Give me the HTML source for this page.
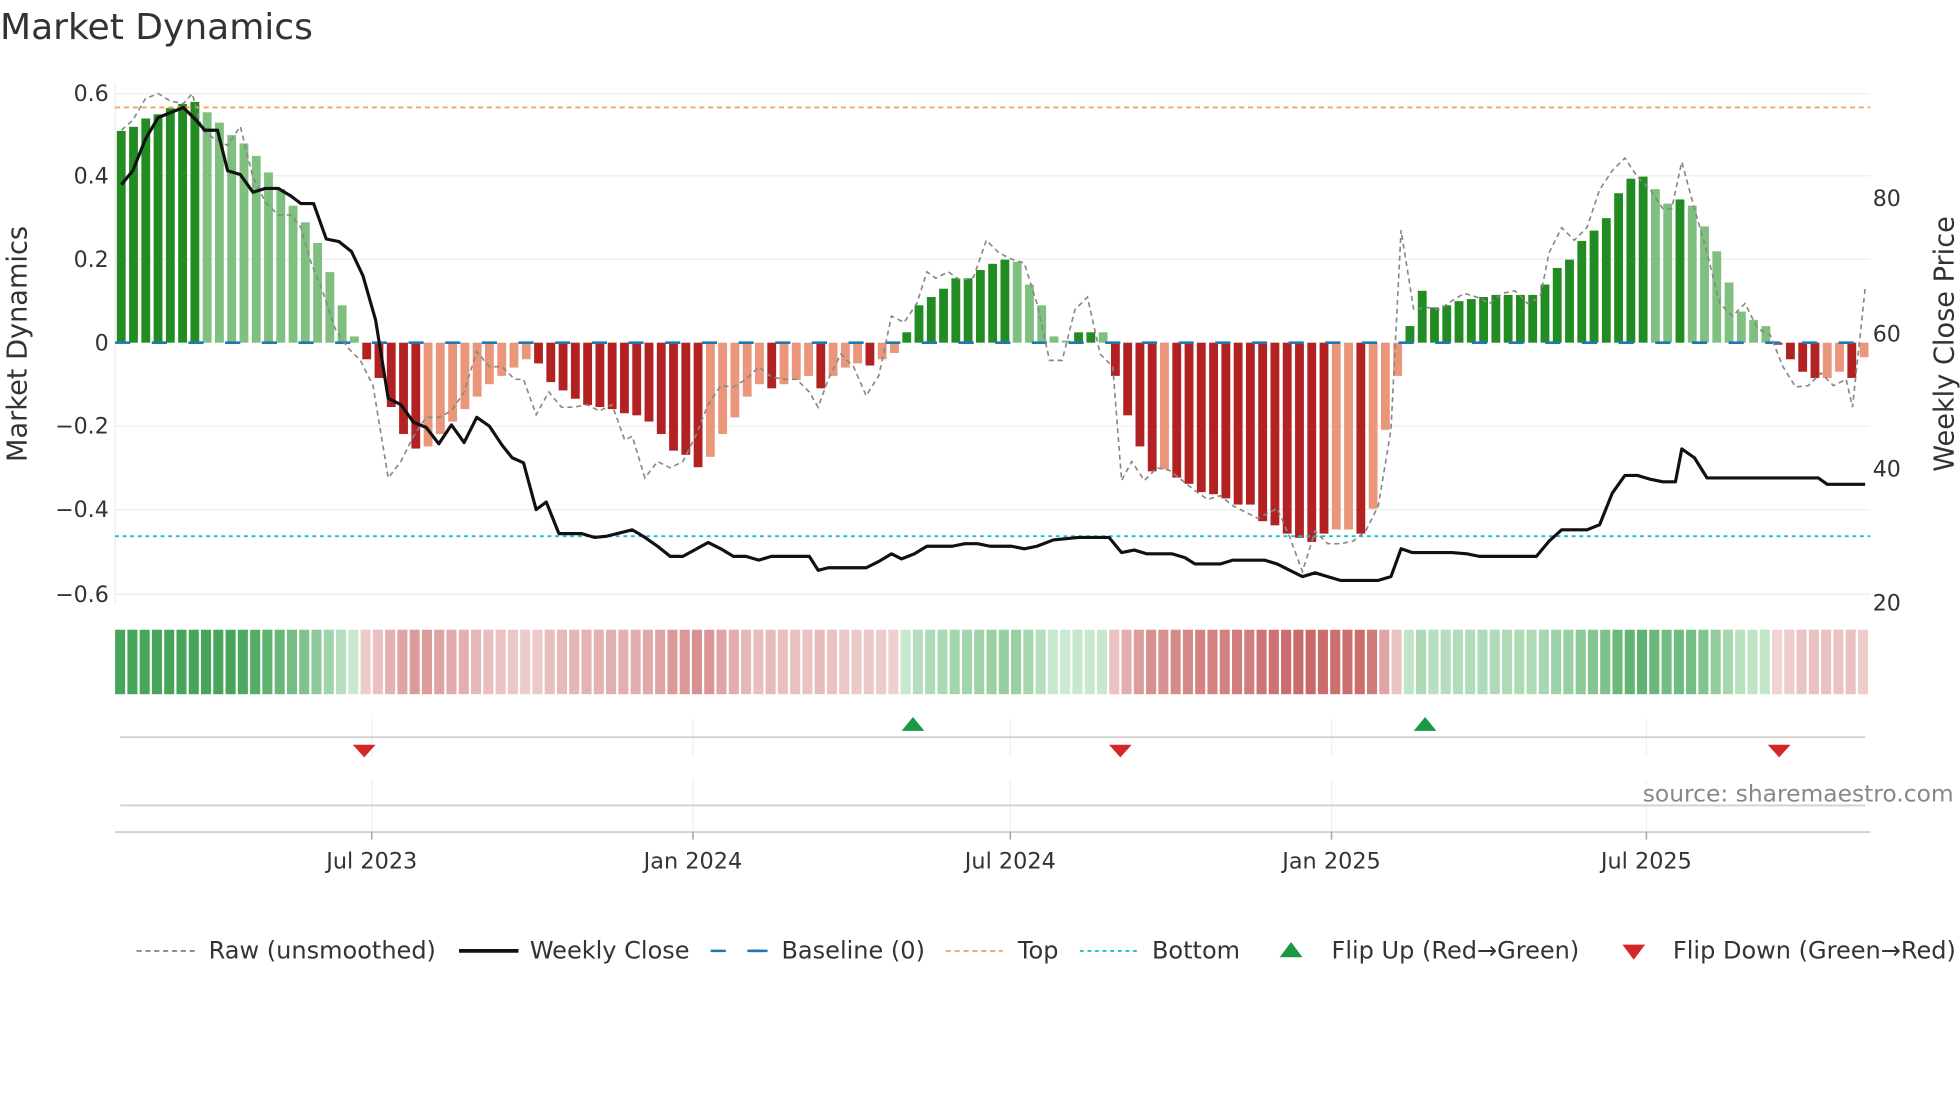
<!DOCTYPE html>
<html><head><meta charset="utf-8"><style>
html,body{margin:0;padding:0;background:#fff;width:1960px;height:1102px;overflow:hidden}
svg{display:block;font-family:"DejaVu Sans","Liberation Sans",sans-serif}
</style></head><body>
<svg id="s" width="1960" height="1102" viewBox="0 0 1550 871.5" xmlns="http://www.w3.org/2000/svg">
<text x="0" y="31" font-size="28.5" fill="#333">Market Dynamics</text>
<g stroke="#ebedf0" stroke-width="1">
<line x1="91" y1="74" x2="1479" y2="74"/><line x1="91" y1="139" x2="1479" y2="139"/><line x1="91" y1="205" x2="1479" y2="205"/><line x1="91" y1="337" x2="1479" y2="337"/><line x1="91" y1="403" x2="1479" y2="403"/><line x1="91" y1="470" x2="1479" y2="470"/>
<line x1="91" y1="66" x2="91" y2="478"/>
</g>
<g font-size="17.5" fill="#333" text-anchor="end">
<text x="86" y="80">0.6</text><text x="86" y="145">0.4</text><text x="86" y="211">0.2</text><text x="86" y="277">0</text><text x="86" y="343">−0.2</text><text x="86" y="409">−0.4</text><text x="86" y="476">−0.6</text>
</g>
<g font-size="17.5" fill="#333">
<text x="1481" y="163">80</text><text x="1481" y="270">60</text><text x="1481" y="377">40</text><text x="1481" y="483">20</text>
</g>
<text transform="translate(21,272) rotate(-90)" font-size="21.5" fill="#333" text-anchor="middle">Market Dynamics</text>
<text transform="translate(1545,272) rotate(-90)" font-size="21.5" fill="#333" text-anchor="middle">Weekly Close Price</text>
<g id="bars"></g>
<g id="strip"></g>
<line x1="91" y1="85" x2="1479" y2="85" stroke="#f4a460" stroke-width="1.5" stroke-dasharray="4,3"/>
<line x1="91" y1="424" x2="1479" y2="424" stroke="#17becf" stroke-width="1.5" stroke-dasharray="3,3"/>
<line x1="91" y1="271" x2="1479" y2="271" stroke="#1f77b4" stroke-width="2" stroke-dasharray="12,17"/>
<polyline id="raw" fill="none" stroke="#888" stroke-width="1.3" stroke-dasharray="4,3"/>
<polyline id="close" fill="none" stroke="#111" stroke-width="2.5" stroke-linejoin="round"/>
<g stroke="#eef0f2" stroke-width="1">
<line x1="294" y1="568" x2="294" y2="598"/><line x1="548" y1="568" x2="548" y2="598"/><line x1="799" y1="568" x2="799" y2="598"/><line x1="1053" y1="568" x2="1053" y2="598"/><line x1="1302" y1="568" x2="1302" y2="598"/>
<line x1="294" y1="616" x2="294" y2="658"/><line x1="548" y1="616" x2="548" y2="658"/><line x1="799" y1="616" x2="799" y2="658"/><line x1="1053" y1="616" x2="1053" y2="658"/><line x1="1302" y1="616" x2="1302" y2="658"/>
</g>
<line x1="95" y1="583" x2="1475" y2="583" stroke="#d0d0d0" stroke-width="1.5"/>
<line x1="95" y1="637" x2="1475" y2="637" stroke="#d0d0d0" stroke-width="1.5"/>
<line x1="91" y1="658" x2="1479" y2="658" stroke="#d0d0d0" stroke-width="1.5"/>
<g stroke="#aaa" stroke-width="1.3"><line x1="294" y1="658" x2="294" y2="664"/><line x1="548" y1="658" x2="548" y2="664"/><line x1="799" y1="658" x2="799" y2="664"/><line x1="1053" y1="658" x2="1053" y2="664"/><line x1="1302" y1="658" x2="1302" y2="664"/></g>
<g fill="#1a9a40"><polygon points="713,578 731,578 722,567"/><polygon points="1118,578 1136,578 1127,567"/></g>
<g fill="#d62728"><polygon points="279,589 297,589 288,599"/><polygon points="877,589 895,589 886,599"/><polygon points="1398,589 1416,589 1407,599"/></g>
<text x="1545" y="634" font-size="18.5" fill="#888" text-anchor="end">source: sharemaestro.com</text>
<g font-size="17.7" fill="#333" text-anchor="middle">
<text x="294" y="687">Jul 2023</text><text x="548" y="687">Jan 2024</text><text x="799" y="687">Jul 2024</text><text x="1053" y="687">Jan 2025</text><text x="1302" y="687">Jul 2025</text>
</g>
<g font-size="19" fill="#333">
<line x1="108" y1="752" x2="154" y2="752" stroke="#888" stroke-width="1.5" stroke-dasharray="4,3"/>
<text x="165" y="758">Raw (unsmoothed)</text>
<line x1="363" y1="752" x2="410" y2="752" stroke="#111" stroke-width="3"/>
<text x="419" y="758">Weekly Close</text>
<line x1="562" y1="752" x2="607" y2="752" stroke="#1f77b4" stroke-width="2" stroke-dasharray="12,17"/>
<line x1="594" y1="752" x2="607" y2="752" stroke="#1f77b4" stroke-width="2"/>
<text x="618" y="758">Baseline (0)</text>
<line x1="748" y1="752" x2="793" y2="752" stroke="#f4a460" stroke-width="1.5" stroke-dasharray="4,3"/>
<text x="805" y="758">Top</text>
<line x1="854" y1="752" x2="899" y2="752" stroke="#17becf" stroke-width="1.5" stroke-dasharray="3,3"/>
<text x="911" y="758">Bottom</text>
<polygon points="1012,757 1030,757 1021,745" fill="#1a9a40"/>
<text x="1053" y="758">Flip Up (Red→Green)</text>
<polygon points="1283,747 1301,747 1292,759" fill="#d62728"/>
<text x="1323" y="758">Flip Down (Green→Red)</text>
</g>
</svg>
<script>
var segs=[
['D',[.51,.52,.54,.55,.565,.575,.58]],
['L',[.555,.53,.50,.48,.45,.41,.37,.33,.29,.24,.17,.09,.015]],
['R',[-.04,-.085,-.155,-.22,-.255]],
['P',[-.25,-.22,-.19,-.16,-.13,-.10,-.08,-.06,-.04]],
['R',[-.05,-.095,-.115,-.135,-.15,-.155,-.16,-.17,-.175,-.19,-.22,-.26,-.27,-.30]],
['P',[-.275,-.22,-.18,-.13,-.10]],
['R',[-.11]],['P',[-.10,-.09,-.08]],['R',[-.11]],['P',[-.08,-.06,-.05]],['R',[-.055]],['P',[-.04,-.025]],
['D',[.025,.09,.11,.13,.155,.155,.175,.19,.20]],
['L',[.195,.14,.09,.015,.005]],['D',[.025,.025]],['L',[.025]],
['R',[-.08,-.175,-.25,-.31]],['P',[-.305]],
['R',[-.325,-.34,-.36,-.365,-.375,-.39,-.39,-.43,-.44,-.46,-.47,-.48,-.46]],
['P',[-.45,-.45]],['R',[-.46]],['P',[-.40,-.21,-.08]],
['D',[.04,.125,.085,.09,.10,.105,.11,.115,.115,.115,.115,.14,.18,.20,.245,.27,.30,.36,.395,.40]],
['L',[.37,.335]],['D',[.345]],['L',[.33,.28,.22,.145,.075,.055,.04]],
['R',[-.005,-.04,-.07,-.085]],['P',[-.085,-.07]],['R',[-.085]],['P',[-.035]]
];
var col={D:'#228b22',L:'#7fbf7f',R:'#b22222',P:'#e9967a'};
var data=[];segs.forEach(function(s){s[1].forEach(function(v){data.push([v,s[0]])})});
var N=data.length,x0=91,W=1388,st=W/N,bw=st*0.72,ns='http://www.w3.org/2000/svg';
var gb=document.getElementById('bars'),gs=document.getElementById('strip');
function r(g,x,y,w,h,f){var e=document.createElementNS(ns,'rect');e.setAttribute('x',x);e.setAttribute('y',y);e.setAttribute('width',w);e.setAttribute('height',h);e.setAttribute('fill',f);g.appendChild(e);}
data.forEach(function(d,i){var v=d[0],x=x0+i*st+(st-bw)/2,h=Math.abs(v)*328.3;
r(gb,x,v>0?271-h:271,bw,Math.max(h,0.5),col[d[1]]);
var a=Math.min(1,Math.abs(v)/0.5);
var c=v>0?'rgb('+Math.round(205-(205-70)*a)+','+Math.round(235-(235-165)*a)+','+Math.round(210-(210-90)*a)+')':'rgb('+Math.round(240-(240-200)*a)+','+Math.round(212-(212-100)*a)+','+Math.round(212-(212-100)*a)+')';
r(gs,x0+i*st,498,st*0.82,51,c);});
document.getElementById('close').setAttribute('points',"96,146 105,135 115,110 125,93 135,89 145,85 155,95 162,103 172,103 180,135 190,138 200,152 210,149 220,149 230,155 238,161 248,161 258,189 268,191 278,199 287,218 297,253 307,315 317,320 327,334 337,338 347,351 357,336 367,350 377,330 387,337 397,352 405,362 414,366 424,403 432,397 442,422 460,422 470,425 480,424 500,419 510,425 520,432 530,440 540,440 560,429 570,434 580,440 590,440 600,443 610,440 630,440 640,440 647,451 655,449 685,449 695,444 705,438 713,442 723,438 733,432 753,432 763,430 773,430 783,432 800,432 810,434 820,432 833,427 853,425 877,425 887,437 897,435 907,438 927,438 937,441 945,446 965,446 975,443 1000,443 1010,446 1020,451 1030,456 1040,453 1050,456 1060,459 1090,459 1100,456 1108,434 1117,437 1148,437 1160,438 1170,440 1215,440 1225,428 1235,419 1255,419 1265,415 1275,390 1285,376 1295,376 1305,379 1315,381 1325,381 1330,355 1340,362 1350,378 1438,378 1445,383 1475,383");
document.getElementById('raw').setAttribute('points',"96,103 105,95 115,78 125,74 135,80 145,82 152,74 160,103 170,110 180,115 190,100 200,140 210,160 220,170 230,170 238,180 245,205 255,230 265,260 275,275 285,285 295,305 307,378 317,365 327,345 337,330 347,330 357,325 367,310 377,278 387,290 397,290 407,300 414,300 424,328 434,310 444,322 454,322 464,320 474,325 484,320 494,348 500,345 510,378 520,365 530,370 540,365 550,345 560,320 570,305 580,306 590,300 600,290 610,298 620,300 630,300 640,310 647,322 655,300 665,280 675,290 685,313 695,297 705,250 715,255 725,240 733,215 740,220 750,215 760,222 770,219 780,190 790,200 800,205 810,208 820,240 830,285 840,285 850,245 860,235 870,280 880,290 887,380 895,365 905,380 915,370 925,372 935,380 945,388 955,395 965,392 975,400 985,405 995,410 1010,402 1020,425 1030,452 1040,420 1050,430 1060,430 1070,428 1080,420 1090,400 1100,340 1108,182 1118,245 1128,243 1138,245 1148,238 1158,232 1168,235 1178,240 1188,232 1198,230 1208,240 1218,235 1225,200 1235,180 1245,190 1255,180 1265,150 1275,135 1285,125 1295,140 1305,150 1315,165 1322,165 1330,128 1340,165 1350,200 1360,240 1370,250 1380,240 1390,260 1400,265 1410,290 1420,306 1430,305 1440,295 1450,305 1460,300 1465,322 1475,228");
</script>
</body></html>
